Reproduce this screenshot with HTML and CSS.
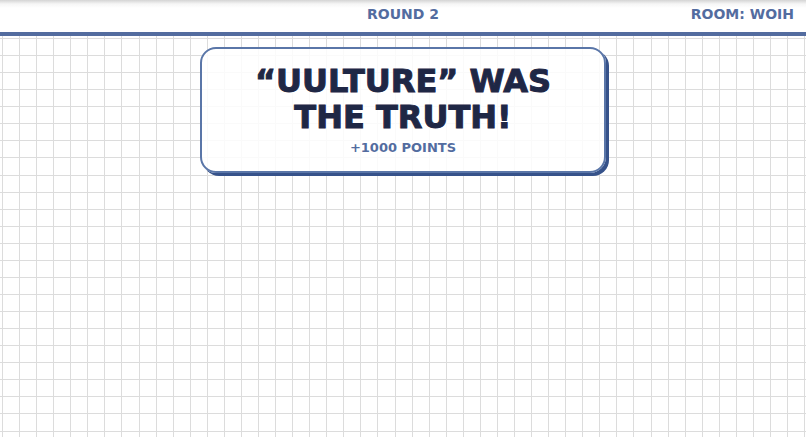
FILE: index.html
```html
<!DOCTYPE html>
<html lang="en">
<head>
    <meta charset="UTF-8">
    <meta name="viewport" content="width=device-width, initial-scale=1.0">
    <title>Round 2</title>
    <link rel="stylesheet" href="styles.css">
</head>
<body>
    <header class="topbar">
        <span class="round">ROUND 2</span>
        <span class="room">ROOM: WOIH</span>
    </header>

    <main class="board">
        <section class="result">
            <h1>“UULTURE” WAS THE TRUTH!</h1>
            <p class="points">+1000 POINTS</p>
        </section>
    </main>
</body>
</html>
```

FILE: styles.css
```css
* {
    box-sizing: border-box;
}
body {
    margin: 0;
    min-height: 100vh;
    display: flex;
    flex-direction: column;
    font-family: "DejaVu Sans", Inter, sans-serif;
    font-weight: bold;
    color: #1f2745;
    background-color: #fff;
    /* 15 squares per tile */
    background-image:
        repeating-linear-gradient(to right, #dcdcdc 0, #dcdcdc 1px, transparent 1px, transparent 6.6667%),
        repeating-linear-gradient(to bottom, #dcdcdc 0, #dcdcdc 1px, transparent 1px, transparent 6.6667%);
    background-size: 256px 256px;
    background-position: 2px 38px;
}
.topbar {
    display: grid;
    grid-template-columns: 1fr auto 1fr;
    align-items: center;
    height: 36px;
    padding: 0 12px 4px;
    border-bottom: 4px solid #536c9f;
    background: linear-gradient(to bottom, #d4d4d4 0, #f6f6f6 4px, #fff 8px);
    color: #536c9f;
    font-size: 14px;
}
.round {
    grid-column: 2;
}
.room {
    justify-self: end;
}
.board {
    flex: 1;
    padding: 11px 16px;
}
.result {
    width: 100%;
    max-width: 406px;
    margin: 0 auto;
    padding: 14px 40px 13px;
    border: 2px solid #5a76a8;
    border-radius: 16px;
    background: rgba(255, 255, 255, 0.85);
    box-shadow: 3px 3px 0 #36528a;
    text-align: center;
}
h1 {
    margin: 0;
    font-size: 32px;
    font-weight: bold;
    line-height: 36px;
    -webkit-text-stroke: 1px #1f2745;
}
.points {
    margin: 3px 0 0;
    color: #536c9f;
    font-size: 13px;
    line-height: 20px;
}
```
